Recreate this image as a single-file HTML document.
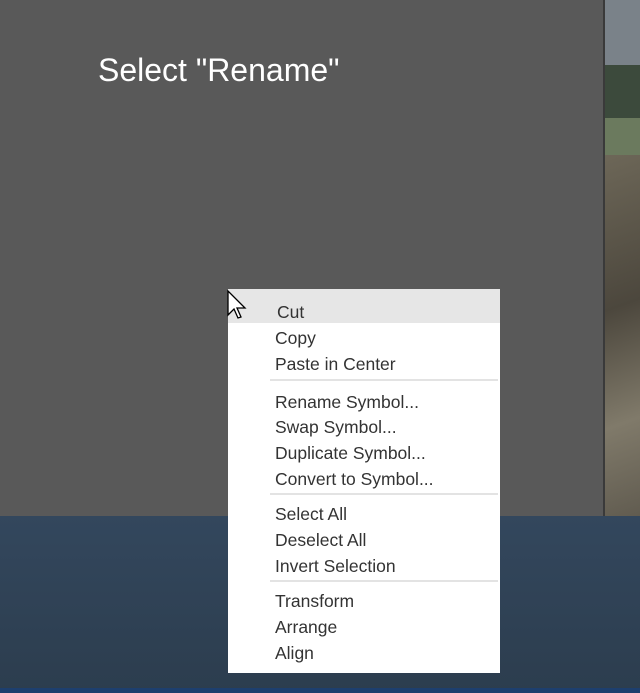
<!DOCTYPE html>
<html><head><style>
body{margin:0;width:640px;height:693px;position:relative;overflow:hidden;background:#2f4155;font-family:"Liberation Sans",sans-serif}
.a{position:absolute}
.t{position:absolute;left:275px;font-size:17.5px;color:#333;line-height:20px;white-space:nowrap}
.sep{position:absolute;left:270px;width:228px;height:2px;background:#e3e3e3}
</style></head><body>
<div class="a" style="left:603px;top:0;width:37px;height:70px;background:#7a8289"></div>
<div class="a" style="left:603px;top:65px;width:37px;height:55px;background:#3c4a3c"></div>
<div class="a" style="left:603px;top:118px;width:37px;height:40px;background:#6b7a5e"></div>
<div class="a" style="left:603px;top:155px;width:37px;height:380px;background:linear-gradient(160deg,#6d6758,#4c473d 40%,#807a6a 70%,#5b564b)"></div>
<div class="a" style="left:0;top:516px;width:640px;height:177px;background:linear-gradient(#33475d,#2c3d4e)"></div>
<div class="a" style="left:0;top:688px;width:640px;height:5px;background:#1d3f6e"></div>
<div class="a" style="left:0;top:0;width:603px;height:516px;background:#595959;border-right:2px solid #3a3a3a"></div>
<div class="a" style="left:98px;top:52px;font-size:32px;color:#fff;line-height:36px">Select "Rename"</div>
<div class="a" style="left:228px;top:289px;width:272px;height:384px;background:#fff"></div>
<div class="a" style="left:228px;top:289px;width:272px;height:34px;background:#e6e6e6"></div>
<div class="t" style="left:277px;top:302px">Cut</div>
<div class="t" style="top:328px">Copy</div>
<div class="t" style="top:354px">Paste in Center</div>
<div class="sep" style="top:379px"></div>
<div class="t" style="top:392px">Rename Symbol...</div>
<div class="t" style="top:417px">Swap Symbol...</div>
<div class="t" style="top:443px">Duplicate Symbol...</div>
<div class="t" style="top:469px">Convert to Symbol...</div>
<div class="sep" style="top:493px"></div>
<div class="t" style="top:504px">Select All</div>
<div class="t" style="top:530px">Deselect All</div>
<div class="t" style="top:556px">Invert Selection</div>
<div class="sep" style="top:580px"></div>
<div class="t" style="top:591px">Transform</div>
<div class="t" style="top:617px">Arrange</div>
<div class="t" style="top:643px">Align</div>
<svg class="a" style="left:227px;top:290px" width="22" height="32" viewBox="0 0 22 32"><path d="M1 1 L1 25 L7 19 L11 28 L14 27 L10 18 L18 18 Z" fill="#fff" stroke="#000" stroke-width="1.3"/></svg>
</body></html>
